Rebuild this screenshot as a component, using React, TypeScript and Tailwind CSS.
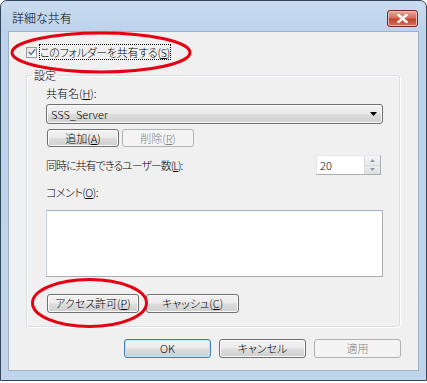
import React from 'react';

const jp = "font-['Noto_Sans_CJK_JP',sans-serif] [font-feature-settings:'palt'] font-light";

type BtnProps = { children: React.ReactNode; w: string; kind?: 'normal' | 'default' | 'disabled' };

const Btn: React.FC<BtnProps> = ({ children, w, kind = 'normal' }) => {
  const look =
    kind === 'disabled'
      ? 'border-[#adb2b5] bg-[#f4f4f4] text-[#838383]'
      : kind === 'default'
      ? 'border-[#3c7fb1] bg-[linear-gradient(#f2f2f2_0%,#ebebeb_49%,#dddddd_51%,#cfcfcf_100%)] shadow-[inset_0_0_0_1px_#bfe6f9] text-black'
      : 'border-[#707070] bg-[linear-gradient(#f2f2f2_0%,#ebebeb_49%,#dddddd_51%,#cfcfcf_100%)] shadow-[inset_0_0_0_1px_#fbfbfb] text-black';
  return (
    <div className={`${w} h-full flex items-center justify-center rounded-[3px] border text-[11px] leading-none ${look}`}>
      {children}
    </div>
  );
};

const App: React.FC = () => {
  return (
    <div className={`relative w-[427px] h-[383px] bg-white ${jp}`}>
      <div className="h-[381px] flex flex-col border border-[#33465a] rounded-t-[7px] bg-[linear-gradient(#cadcf0_0px,#bcd3eb_30px,#c0d5ec_100%)] pl-[7px] pr-[7px] pb-[9px]">
        {/* title bar */}
        <div className="h-[30px] shrink-0 flex items-start justify-between">
          <span className="mt-[9px] pl-[4px] text-[12px] leading-[16px] text-black">詳細な共有</span>
          <div className="mt-[9px] mr-[1px] w-[31px] h-[17px] rounded-[3px] border border-[#6e2b22] bg-[linear-gradient(#e9a99b_0%,#d7715e_45%,#c4432d_55%,#d0745f_100%)] shadow-[inset_0_0_0_1px_#eebbb0] flex items-center justify-center">
            <svg width="11" height="9" viewBox="0 0 11 9">
              <path d="M1.5 1 L9.5 8 M9.5 1 L1.5 8" stroke="#ffffff" strokeWidth="2.4" strokeLinecap="square" />
            </svg>
          </div>
        </div>

        {/* client area */}
        <div className="flex-1 flex flex-col bg-[#f0f0f0] border border-[#9fb0c6]">
          <div className="mt-[12px] ml-[17px] h-[16px] flex items-center">
            <div className="w-[11px] h-[11px] border border-[#9a9a9a] bg-[linear-gradient(135deg,#e0e0e0,#ffffff)] flex items-center justify-center">
              <svg width="8" height="8" viewBox="0 0 8 8">
                <path d="M0.8 4 L3 6.4 L7.2 1.2" stroke="#5a6fa3" strokeWidth="1.4" fill="none" />
              </svg>
            </div>
            <span className="ml-[2px] px-[1px] h-[16px] flex items-center text-[11px] leading-none tracking-[-0.3px] outline-dotted outline-1 outline-offset-[-1px] outline-black">
              このフォルダーを共有する(<u>S</u>)
            </span>
          </div>

          <fieldset className="mt-[8px] ml-[17px] w-[374px] p-0 m-0 border border-[#d5dfe5] rounded-[3px] shadow-[inset_1px_1px_0_#ffffff,1px_1px_0_#ffffff]">
            <legend className="ml-[5px] px-[2px] text-[11px] leading-[14px] text-black">設定</legend>
            <div className="pl-[19px] pr-[16px] pt-[4px] pb-[13px] flex flex-col">
              <div className="h-[14px] text-[11px] leading-[14px]">
                共有名(<u>H</u>):
              </div>

              <div className="mt-[4px] h-[20px] w-full rounded-[3px] border border-[#707070] bg-[linear-gradient(#f2f2f2_0%,#ebebeb_49%,#dddddd_51%,#cfcfcf_100%)] shadow-[inset_0_0_0_1px_#fbfbfb] flex items-center justify-between pl-[4px] pr-[5px]">
                <span className="text-[11px] leading-none">SSS_Server</span>
                <svg width="7" height="4" viewBox="0 0 7 4">
                  <path d="M0 0 H7 L3.5 4 Z" fill="#000000" />
                </svg>
              </div>

              <div className="mt-[5px] h-[18px] ml-[1px] flex gap-[3px]">
                <Btn w="w-[72px]">
                  追加(<u>A</u>)
                </Btn>
                <Btn w="w-[72px]" kind="disabled">
                  削除(<u>R</u>)
                </Btn>
              </div>

              <div className="mt-[8px] h-[20px] flex items-center justify-between">
                <span className="text-[11px] leading-none tracking-[-1px]">
                  同時に共有できるユーザー数(<u>L</u>):
                </span>
                <div className="mr-[2px] w-[65px] h-[20px] flex border border-[#abadb3] border-t-[#e3e9ef] border-l-[#e2e3ea] bg-white">
                  <span className="flex-1 flex items-center pl-[3px] text-[11px] leading-none">20</span>
                  <div className="w-[16px] flex flex-col border-l border-[#d6dadf]">
                    <div className="flex-1 flex items-center justify-center bg-[linear-gradient(#f6f6f6,#e8e8e8)] border-b border-[#d6dadf]">
                      <svg width="5" height="3" viewBox="0 0 5 3">
                        <path d="M0 3 L2.5 0 L5 3 Z" fill="#8a9bb5" />
                      </svg>
                    </div>
                    <div className="flex-1 flex items-center justify-center bg-[linear-gradient(#ececec,#dedede)]">
                      <svg width="5" height="3" viewBox="0 0 5 3">
                        <path d="M0 0 L5 0 L2.5 3 Z" fill="#8a9bb5" />
                      </svg>
                    </div>
                  </div>
                </div>
              </div>

              <div className="mt-[10px] h-[14px] text-[11px] leading-[14px] tracking-[-0.5px]">
                コメント(<u>O</u>):
              </div>

              <div className="mt-[11px] h-[67px] w-full bg-white border border-[#abadb3] border-t-[#9fb3c8] border-l-[#c5d0db]" />

              <div className="mt-[17px] h-[19px] ml-[1px] flex gap-[7px]">
                <Btn w="w-[92px]">
                  アクセス許可(<u>P</u>)
                </Btn>
                <Btn w="w-[93px]">
                  キャッシュ(<u>C</u>)
                </Btn>
              </div>
            </div>
          </fieldset>

          <div className="mt-[12px] h-[19px] pr-[17px] flex justify-end gap-[8px]">
            <Btn w="w-[87px]" kind="default">
              OK
            </Btn>
            <Btn w="w-[87px]">キャンセル</Btn>
            <Btn w="w-[87px]" kind="disabled">
              適用
            </Btn>
          </div>
        </div>
      </div>

      {/* red annotation marks */}
      <svg className="absolute inset-0 pointer-events-none" width="427" height="383" viewBox="0 0 427 383">
        <ellipse cx="101" cy="52.5" rx="89" ry="19.5" fill="none" stroke="#e60012" strokeWidth="3" />
        <ellipse cx="89.5" cy="303" rx="57" ry="23.5" fill="none" stroke="#e60012" strokeWidth="3" />
      </svg>
    </div>
  );
};

export default App;
